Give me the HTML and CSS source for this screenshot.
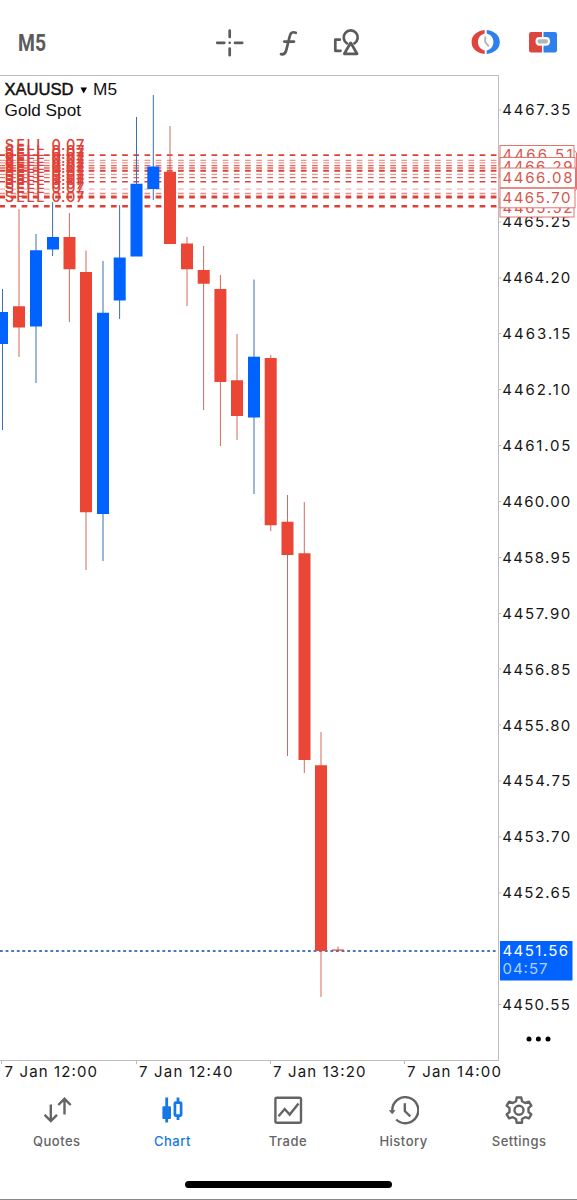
FILE: index.html
```html
<!DOCTYPE html>
<html lang="en">
<head>
<meta charset="utf-8">
<title>XAUUSD M5</title>
<link rel="stylesheet" href="styles.css">
</head>
<body>
<div class="app">
  <header class="toolbar">
    <svg class="timeframe" width="40" height="32" viewBox="0 0 40 32"><text x="0" y="24" textLength="28" lengthAdjust="spacingAndGlyphs">M5</text></svg>
    <div class="tools">
      <svg width="30" height="30" viewBox="0 0 30 30" class="line-icon"><path d="M14.700 2.500V9M14.700 20.500V27.200M2.200 14.800H9.300M20 14.800H27.200"/><circle cx="14.700" cy="14.800" r="1.300" fill="#5b5b5b" stroke="none"/></svg>
      <svg width="30" height="30" viewBox="0 0 30 30" class="line-icon"><path d="M22.800 4.800C19.500 3.400 17.600 4.800 16.800 8L13.200 22.300C12.400 25.400 10.700 26.700 8 26.200M11.300 13.600H21"/></svg>
      <svg width="30" height="30" viewBox="0 0 30 30" class="line-icon"><path d="M8.800 11.700H4.300V22.800H9.500M16 15.400A7 7 0 1 1 23.400 15.400M19.700 14.800L13.300 25.800H26.100Z"/></svg>
    </div>
    <div class="trade-tools">
      <svg width="30" height="26" viewBox="0 0 30 26"><path d="M13.700 0C6 1 .6 5 .6 12S6 23 13.700 24V20.500C9.500 19.200 7 16.600 7 12S9.500 4.800 13.700 3.500Z" fill="#e0453c"/><path d="M15.700 0C23.400 1 28.800 5 28.800 12S23.400 23 15.700 24V20.500C19.900 19.200 22.400 16.600 22.400 12S19.900 4.800 15.700 3.500Z" fill="#2f80ea"/><path d="M14.200 6.500V12L17.800 16.500" fill="none" stroke="#b1b6b9" stroke-width="2"/></svg>
      <svg width="30" height="26" viewBox="1 0 30 26"><path d="M3.200 2H14V7H11.500Q7.500 7 7.500 11.300T11.500 15.800H14V22.500H3.200Q1 22.500 1 20.300V4.200Q1 2 3.200 2Z" fill="#dc463e"/><path d="M15.500 2H26.800Q29 2 29 4.200V20.300Q29 22.500 26.800 22.500H15.500V15.800H18Q22 15.800 22 11.300T18 7H15.500Z" fill="#2f80ea"/><rect x="9.500" y="9.300" width="10.500" height="4.200" rx="2" fill="#b1b6b9"/></svg>
    </div>
  </header>

  <svg class="chart" width="577" height="1010" viewBox="0 75 577 1010">
    <defs>
      <clipPath id="plot"><rect x="0" y="76" width="498" height="984"/></clipPath>
    </defs>
    <g class="frame"><path d="M0 75.500H498.500V1060.500H0"/><path d="M1.500 1061v3M136.500 1061v3M270.500 1061v3M404.500 1061v3"/>
      <path d="M499 110h2M499 222h2M499 278h2M499 333.500h2M499 389.500h2M499 445.500h2M499 501.500h2M499 557.500h2M499 613.500h2M499 669h2M499 725h2M499 781h2M499 837h2M499 893h2M499 1004.500h2"/></g>

    <g class="positions" clip-path="url(#plot)">
      <path stroke-width="1.700" d="M-.7 155.200H498"/>
      <path stroke-width="1.300" opacity=".55" d="M-.7 160.300H498M-.7 162.800H498M-.7 174.300H498"/>
      <path stroke-width="1.400" opacity=".8" d="M-.7 165.600H498M-.7 168H498M-.7 177.600H498"/>
      <path stroke-width="2" d="M-.7 170.800H498"/>
      <path stroke-width="1.500" d="M-.7 181.800H498"/>
      <path stroke-width="1.200" opacity=".4" d="M-.7 189.200H498"/>
      <path stroke-width="1.500" opacity=".6" d="M-.7 193.600H498"/>
      <path stroke-width="3" d="M-.7 197H498"/>
      <path stroke-width="2.600" d="M-.7 206.200H498"/>
    </g>
    <path class="bid" d="M0 951H498"/>

    <path class="wick up" d="M2.500 289V430M36 234V383M52.600 202V256M103 261V561M119.600 205V319M136.500 117V256M153.300 95V200M254 279.500V494"/>
    <path class="wick down" d="M19 209V357M69.400 213V322M86 250.500V570M170 126V244M187 237V306M203.600 246V410M220.400 275V446M237 334V440M270.800 355V531M287.500 495V756M304.300 502V773M321 732V997M338 946.500V951"/>
    <path class="body up" d="M0 312H8V344H0ZM30 250.300H42V326.500H30ZM47 237H59V249.500H47ZM97 312.700H109V514H97ZM113.700 257.500H125.700V300.500H113.700ZM130.500 183.700H142.500V256.500H130.500ZM147.300 166.500H159.300V189H147.300Z"/>
    <path class="body up" d="M248 356.700H260V417.500H248Z"/>
    <path class="body down" d="M13 306.300H25V327.500H13ZM63.500 237H75.500V269.300H63.500ZM80 272H92V512.300H80ZM164 171.700H176V244H164ZM181 243.500H193V269.300H181ZM197.700 270H209.700V283.700H197.700ZM214.400 289H226.400V382H214.400ZM231 380.300H243V416H231ZM264.700 358H276.700V525.200H264.700ZM281.500 521.700H293.500V555H281.500ZM298.500 553.300H310.500V760H298.500ZM315 765.300H327V951H315ZM332 949.500H344V950.700H332Z"/>

    <g class="orders">
      <text y="149.700" x="4.800 16.300 26.500 36.300 47 51.500 61 66 76">SELL 0.07</text>
      <text y="155.700" x="4.800 16.300 26.500 36.300 47 51.500 61 66 76">SELL 0.07</text>
      <text y="159.300" x="4.800 16.300 26.500 36.300 47 51.500 61 66 76">SELL 0.07</text>
      <text y="162.500" x="4.800 16.300 26.500 36.300 47 51.500 61 66 76">SELL 0.07</text>
      <text y="166" x="4.800 16.300 26.500 36.300 47 51.500 61 66 76">SELL 0.07</text>
      <text y="170" x="4.800 16.300 26.500 36.300 47 51.500 61 66 76">SELL 0.07</text>
      <text y="173" x="4.800 16.300 26.500 36.300 47 51.500 61 66 76">SELL 0.07</text>
      <text y="177" x="4.800 16.300 26.500 36.300 47 51.500 61 66 76">SELL 0.07</text>
      <text y="180.500" x="4.800 16.300 26.500 36.300 47 51.500 61 66 76">SELL 0.07</text>
      <text y="185" x="4.800 16.300 26.500 36.300 47 51.500 61 66 76">SELL 0.07</text>
      <text y="189" x="4.800 16.300 26.500 36.300 47 51.500 61 66 76">SELL 0.07</text>
      <text y="192.500" x="4.800 16.300 26.500 36.300 47 51.500 61 66 76">SELL 0.07</text>
      <text y="202" x="4.800 16.300 26.500 36.300 47 51.500 61 66 76">SELL 0.07</text>
    </g>

    <text class="title" x="4.500" y="95" textLength="69" lengthAdjust="spacingAndGlyphs">XAUUSD</text>
    <path d="M80.500 87.500H87L83.700 93.500Z"/>
    <text class="name" x="93" y="95" textLength="24" lengthAdjust="spacingAndGlyphs">M5</text>
    <text class="name" x="4.500" y="116" textLength="76.500" lengthAdjust="spacingAndGlyphs">Gold Spot</text>

    <g class="axis">
      <text x="502.300" y="115.300" textLength="68">4467.35</text>
      <text x="502.300" y="227.300" textLength="68">4465.25</text>
      <text x="502.300" y="283.200" textLength="68">4464.20</text>
      <text x="502.300" y="339" textLength="68">4463.15</text>
      <text x="502.300" y="395" textLength="68">4462.10</text>
      <text x="502.300" y="451" textLength="68">4461.05</text>
      <text x="502.300" y="507" textLength="68">4460.00</text>
      <text x="502.300" y="562.800" textLength="68">4458.95</text>
      <text x="502.300" y="618.700" textLength="68">4457.90</text>
      <text x="502.300" y="674.600" textLength="68">4456.85</text>
      <text x="502.300" y="730.500" textLength="68">4455.80</text>
      <text x="502.300" y="786.400" textLength="68">4454.75</text>
      <text x="502.300" y="842.300" textLength="68">4453.70</text>
      <text x="502.300" y="898.200" textLength="68">4452.65</text>
      <text x="502.300" y="1010" textLength="67.500">4450.55</text>
      <text x="4.500" y="1077" textLength="92.500">7 Jan 12:00</text>
      <text x="139" y="1077" textLength="93.500">7 Jan 12:40</text>
      <text x="273" y="1077" textLength="92.500">7 Jan 13:20</text>
      <text x="407" y="1077" textLength="94">7 Jan 14:00</text>
    </g>

    <g class="tags">
      <rect x="500" y="145.500" width="74" height="20"/><text x="502.500" y="160" textLength="70">4466.51</text>
      <path d="M574 150l2.500 3v36l-2.500 3"/>
      <rect x="500" y="157.500" width="75" height="20"/><text x="502.500" y="171.500" textLength="70">4466.29</text>
      <rect x="500" y="197.500" width="74" height="19.500"/><text x="502.500" y="213" textLength="70">4465.52</text>
      <rect x="500" y="168" width="75.500" height="19.700"/><text x="502.500" y="183" textLength="70">4466.08</text>
      <rect x="500" y="188.300" width="75" height="19.500"/><text x="502.500" y="203.300" textLength="68">4465.70</text>
    </g>

    <rect x="500" y="941" width="72.500" height="39.500" fill="#0062ff"/>
    <text class="bid-price" x="502.500" y="956.300" textLength="65.500">4451.56</text>
    <text class="bid-time" x="502.500" y="974.300" textLength="45">04:57</text>
    <g fill="#000"><circle cx="529" cy="1039" r="2.500"/><circle cx="538.400" cy="1039" r="2.500"/><circle cx="548" cy="1039" r="2.500"/></g>
  </svg>

  <nav class="tabs">
    <a class="tab"><svg width="30" height="30" viewBox="0 0 30 30"><path d="M8.800 8.500V25M2.600 18.800L8.800 25L15 18.800M22.500 18.500V2.800M16.300 9L22.500 2.800L28.700 9"/></svg><span>Quotes</span></a>
    <a class="tab active"><svg width="30" height="30" viewBox="0 0 30 30"><path d="M9.700 1.500V26.500M21 1.500V6M21 19.500V24" stroke-width="2.800"/><rect x="5.400" y="10.200" width="8.600" height="12.800" rx="1" fill="currentColor" stroke="none"/><rect x="17.900" y="6.600" width="6.200" height="13" rx=".8" stroke-width="2.700"/></svg><span>Chart</span></a>
    <a class="tab"><svg width="30" height="30" viewBox="0 0 30 30"><rect x="2.400" y="1.800" width="25.600" height="25" rx="1.500"/><path d="M5.500 20.300L11.700 13L16.700 18.600L25.500 7.500"/></svg><span>Trade</span></a>
    <a class="tab"><svg width="30" height="30" viewBox="0 0 30 30"><path d="M3.300 16.300V14A13 13 0 1 1 7.200 23.500M15.800 7.200V15L21.300 20.300"/><path d="M-.2 14.300H6.600L3.200 18.200Z" fill="currentColor" stroke="none"/></svg><span>History</span></a>
    <a class="tab"><svg width="30" height="30" viewBox="0 0 30 30"><path d="M12.700 1.500H17.300L18 5.200L21.200 7L24.900 5.700L27.300 9.700L24.500 12.100V16L27.300 18.400L24.900 22.400L21.200 21.200L18 23V26.800H12.700L12 23L8.800 21.200L5.100 22.400L2.700 18.400L5.500 16V12.100L2.700 9.700L5.100 5.700L8.800 7L12 5.200Z" stroke-linejoin="round"/><circle cx="15" cy="14.200" r="4.500"/></svg><span>Settings</span></a>
  </nav>
  <footer class="home"><div class="home-bar"></div></footer>
</div>
</body>
</html>
```

FILE: styles.css
```css
body {
  margin: 0;
  background: #fff;
  font-family: Inter, "Liberation Sans", sans-serif;
}

.app {
  display: flex;
  flex-direction: column;
  box-sizing: border-box;
  width: 577px;
  height: 1200px;
  border-bottom: 1px solid #888;
  overflow: hidden;
}

.toolbar {
  display: flex;
  align-items: center;
  flex: none;
  box-sizing: border-box;
  height: 75px;
  padding: 11px 18px 0;
}

.timeframe {
  flex: none;
  fill: #5b5b5b;
  font: bold 24px Roboto, sans-serif;
}

.tools {
  display: flex;
  gap: 28px;
  margin-left: 157px;
}

.line-icon {
  fill: none;
  stroke: #5b5b5b;
  stroke-width: 2.7;
  stroke-linecap: round;
  stroke-linejoin: round;
}

.trade-tools {
  display: flex;
  gap: 28px;
  margin-left: auto;
}

.chart {
  display: block;
  flex: none;
}

.frame {
  fill: none;
  stroke: #bdbdbd;
  stroke-width: 1;
}

.positions {
  stroke: #dc4137;
  stroke-dasharray: 5.7 5.47;
}

.bid {
  stroke: #4479bb;
  stroke-width: 1.8;
  stroke-dasharray: 2.8 2.8;
}

.wick { stroke-width: 1; }
.wick.up { stroke: #3a70ad; }
.wick.down { stroke: #d5695f; }
.body.up { fill: #0062ff; }
.body.down { fill: #ea4535; }

.orders {
  fill: #e04137;
  font-size: 14.5px;
  font-weight: 500;
}

.title,
.name {
  fill: #111;
  font: 16.5px "Liberation Sans", sans-serif;
}

.title {
  stroke: #111;
  stroke-width: 0.5;
}

.axis { fill: #161616; font-size: 15px; }

.tags {
  fill: #d4574e;
  font-size: 15px;
}

.tags rect {
  fill: #fff;
  stroke: #e4756d;
  stroke-width: 1;
}

.tags path {
  fill: none;
  stroke: #e4756d;
}

.bid-price { fill: #fff; font-size: 15px; }
.bid-time { fill: #b0d0ff; font-size: 15px; }

.tabs {
  display: grid;
  grid-template-columns: repeat(5, 115.6px);
  flex: none;
  height: 96px;
  margin-left: -1px;
}

.tab {
  display: flex;
  flex-direction: column;
  align-items: center;
  gap: 7px;
  padding-top: 11px;
  color: #646464;
  font-size: 13px;
  font-weight: 500;
  line-height: 16px;
  letter-spacing: 0.5px;
}

.tab svg {
  fill: none;
  stroke: currentColor;
  stroke-width: 2.4;
}

.tab.active { color: #1478e6; }

.home {
  display: flex;
  justify-content: center;
}

.home-bar {
  width: 207px;
  height: 7px;
  border-radius: 4px;
  background: #000;
}
```
